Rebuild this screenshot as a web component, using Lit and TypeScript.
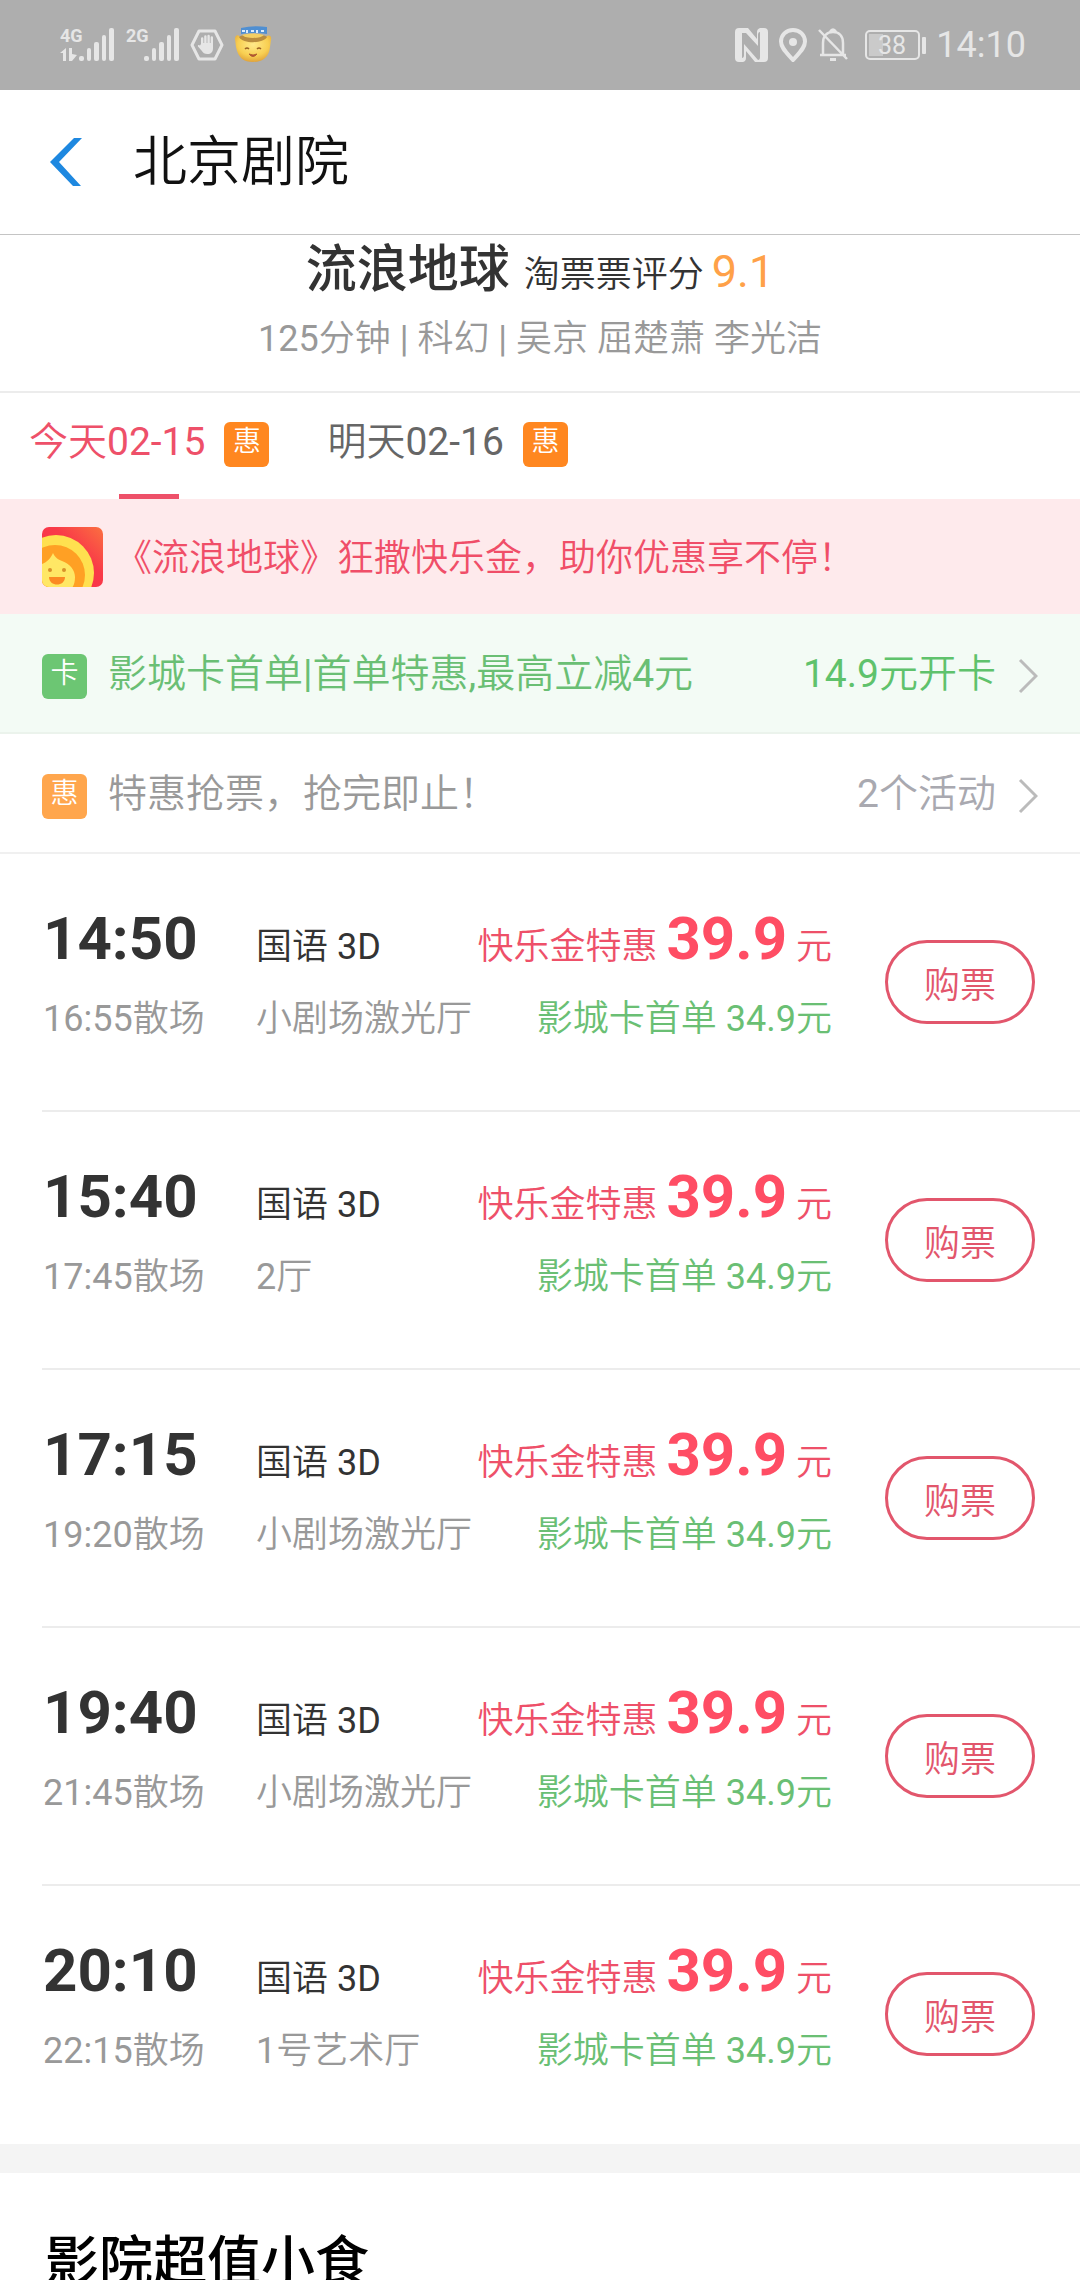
import { LitElement, html, css, svg } from "lit";
import { customElement, property, state } from "lit/decorators.js";
import { classMap } from "lit/directives/class-map.js";

interface Show {
  start: string;
  end: string;
  version: string;
  hall: string;
  price: string;
  cardPrice: string;
}

const SHOWS: Show[] = [
  { start: "14:50", end: "16:55", version: "国语 3D", hall: "小剧场激光厅", price: "39.9", cardPrice: "34.9" },
  { start: "15:40", end: "17:45", version: "国语 3D", hall: "2厅", price: "39.9", cardPrice: "34.9" },
  { start: "17:15", end: "19:20", version: "国语 3D", hall: "小剧场激光厅", price: "39.9", cardPrice: "34.9" },
  { start: "19:40", end: "21:45", version: "国语 3D", hall: "小剧场激光厅", price: "39.9", cardPrice: "34.9" },
  { start: "20:10", end: "22:15", version: "国语 3D", hall: "1号艺术厅", price: "39.9", cardPrice: "34.9" },
];

const DAYS = ["今天02-15", "明天02-16"];

@customElement("status-bar")
export class StatusBar extends LitElement {
  static styles = css`
    :host {
      display: flex;
      align-items: center;
      justify-content: space-between;
      height: 90px;
      padding: 0 54px 0 60px;
      background: #aeaeae;
      color: #e6e6e6;
      font-size: 36px;
      line-height: 48px;
    }
    .group {
      display: flex;
      align-items: center;
      gap: 10px;
    }
    svg {
      display: block;
      fill: currentColor;
    }
    .net {
      font: 700 18px "Liberation Sans Narrow", Roboto, sans-serif;
    }
    .level {
      font: 400 25px Roboto, sans-serif;
    }
  `;

  private signal(label: string, data: boolean) {
    const x = data ? 19 : 18;
    return html`<svg width=${data ? 56 : 54} height="48" viewBox="0 -6 ${data ? 56 : 54} 48">
      <text class="net" x="0" y="15">${label}</text>
      ${data ? svg`<path d="M0 26l6-5v13h-3v-8zM9 21h3v6l5 1-5 6h-3z" />` : null}
      <rect x=${x} y="29" width="5" height="5" rx="2" />
      <rect x=${x + 8} y="21" width="4" height="13" rx="2" />
      <rect x=${x + 15} y="15" width="5" height="19" rx="2" />
      <rect x=${x + 23} y="8" width="4" height="26" rx="2" />
      <rect x=${x + 30} y="1" width="5" height="33" rx="2" />
    </svg>`;
  }

  render() {
    return html`
      <div class="group">
        ${this.signal("4G", true)} ${this.signal("2G", false)}
        <svg width="34" height="32" viewBox="0 0 34 32">
          <path d="M9 2h16l7 14-7 14H9L2 16z" fill="none" stroke="currentColor" stroke-width="3" stroke-linejoin="round" />
          <path d="M11 15V9.500a1.200 1.200 0 0 1 2.400 0V14h.8V7.500a1.200 1.200 0 0 1 2.400 0V14h.8V7a1.200 1.200 0 0 1 2.400 0v7h.8V8.500a1.200 1.200 0 0 1 2.400 0V19c0 4-2 6-5.500 6-3 0-4.500-1-6-3.500L8 17.500c-.6-1.500 1-2 2-1z" />
        </svg>
        <svg width="38" height="38" viewBox="0 0 38 38">
          <defs>
            <radialGradient id="face" cx=".5" cy=".35" r=".7">
              <stop offset="0" stop-color="#ffe98a" />
              <stop offset=".6" stop-color="#f8cf52" />
              <stop offset="1" stop-color="#dc9a35" />
            </radialGradient>
          </defs>
          <path d="M1 13c0-4 3-5 5-2 6 5 20 5 26 0 3-3 6-1 5 3l-1 7c-1 11-8 15-17 15S4 32 2 21z" fill="url(#face)" />
          <path d="M5 11c5-4 23-4 28 0-4 7-24 7-28 0z" fill="#b98c3e" />
          <path d="M8 9c6-2 16-2 22 0-4 4-18 4-22 0z" fill="#f3cf63" />
          <path d="M7 2q12-3 26-1v7q-13-2-26 0z" fill="#4f8fd2" />
          <path d="M8 5h3M13 4v3M17 5h3M23 4v3M27 5h3" stroke="#dcebfa" stroke-width="2" />
          <path d="M11 23q2-2 4 0M23 23q2-2 4 0" fill="none" stroke="#9b6224" stroke-width="1.500" />
          <path d="M15 28q4 2 8 0q-4 5-8 0z" fill="#b8473a" stroke="#b06030" />
        </svg>
      </div>
      <div class="group">
        <svg width="33" height="34" viewBox="0 0 33 34">
          <path fill-rule="evenodd" d="M4 0H13L22 11V4q0-3 3-4h4q4 0 4 4v26q0 4-4 4H20L11 23v7q0 3-3 4H4q-4 0-4-4V4Q0 0 4 0zM7 5v25q2 0 2-3V16l14 16q2 0 2-3V4q-2 0-2 3v11L11 5z" />
        </svg>
        <svg width="30" height="34" viewBox="0 0 30 34">
          <path d="M15 2C8 2 3 7 3 13.500 3 20 9 25 15 32c6-7 12-12 12-18.500C27 7 22 2 15 2z" fill="none" stroke="currentColor" stroke-width="4" />
          <circle cx="15" cy="14" r="4" />
        </svg>
        <svg width="30" height="34" viewBox="0 0 30 34">
          <path d="M5 26V15C5 8 9 4 15 4s10 4 10 11v11M2 27h26M12 4q3-5 6 0M1 2l28 29" fill="none" stroke="currentColor" stroke-width="2.500" />
          <rect x="12" y="30" width="6" height="3" />
        </svg>
        <svg width="68" height="34" viewBox="-7 0 68 34">
          <rect x="1" y="3" width="53" height="28" rx="4" fill="none" stroke="currentColor" stroke-width="2" />
          <rect x="4" y="6" width="14" height="22" opacity=".5" />
          <text class="level" x="13" y="26">38</text>
          <rect x="57" y="9" width="4" height="17" rx="1" />
        </svg>
        <span>14:10</span>
      </div>
    `;
  }
}

@customElement("promo-row")
export class PromoRow extends LitElement {
  @property() tag = "";
  @property() text = "";
  @property() action = "";
  @property({ reflect: true }) tone = "plain";

  static styles = css`
    :host {
      display: block;
      border-bottom: 2px solid #f0f0f0;
      background: #fff;
      color: #999;
    }
    :host([tone="card"]) {
      border-color: #ebf3ec;
      background: #f3fbf5;
      color: #6abf74;
    }
    .link {
      display: flex;
      align-items: center;
      padding: 34px 42px 33px;
      color: inherit;
      text-decoration: none;
      font-size: 39px;
      line-height: 48px;
    }
    .tag {
      box-sizing: border-box;
      width: 45px;
      height: 45px;
      margin-top: 6px;
      border-radius: 6px;
      background: #ffa64d;
      color: #fff;
      font-size: 28px;
      line-height: 40px;
      text-align: center;
    }
    :host([tone="card"]) .tag {
      background: #6cc673;
    }
    .text {
      flex: 1;
      margin-left: 21px;
    }
    .action {
      color: #a9a9b0;
    }
    :host([tone="card"]) .action {
      color: #5fc26c;
    }
    .arrow {
      margin: 4px 0 0 22px;
      fill: none;
      stroke: #bbb;
      stroke-width: 3;
    }
  `;

  render() {
    return html`<a class="link" href="#">
      <span class="tag">${this.tag}</span>
      <span class="text">${this.text}</span>
      <span class="action">${this.action}</span>
      <svg class="arrow" width="20" height="36" viewBox="0 0 20 36"><path d="M2 2l16 16L2 34" /></svg>
    </a>`;
  }
}

@customElement("show-row")
export class ShowRow extends LitElement {
  @property({ attribute: false }) show!: Show;

  static styles = css`
    :host {
      display: flex;
      align-items: center;
      margin-left: 42px;
      padding-right: 45px;
      border-bottom: 2px solid #ececec;
    }
    .info {
      flex: 1;
      display: grid;
      grid-template-columns: 213px 1fr auto;
      align-items: baseline;
      row-gap: 20px;
      padding: 49px 0 67px 1px;
      font-size: 36px;
      line-height: 48px;
      white-space: nowrap;
      color: #999;
    }
    .start {
      color: #333;
      font-size: 60px;
      font-weight: 700;
      line-height: 72px;
    }
    .version {
      color: #333;
    }
    .price {
      color: #ee5069;
      text-align: right;
    }
    .amount {
      color: #ff4d64;
      font-size: 60px;
      line-height: 72px;
    }
    .card {
      color: #6abf74;
      text-align: right;
    }
    .buy {
      width: 150px;
      height: 84px;
      margin-left: 53px;
      padding: 0;
      border: 3px solid #e2566c;
      border-radius: 42px;
      background: none;
      color: #e2566c;
      font: inherit;
      font-size: 36px;
    }
  `;

  render() {
    const s = this.show;
    return html`
      <div class="info">
        <time class="start">${s.start}</time>
        <span class="version">${s.version}</span>
        <span class="price">快乐金特惠 <b class="amount">${s.price}</b> 元</span>
        <span>${s.end}散场</span>
        <span>${s.hall}</span>
        <span class="card">影城卡首单 ${s.cardPrice}元</span>
      </div>
      <button class="buy" type="button">购票</button>
    `;
  }
}

@customElement("app-root")
export class AppRoot extends LitElement {
  @state() private day = 0;

  static styles = css`
    :host {
      display: flex;
      flex-direction: column;
      height: 100vh;
      background: #fff;
      color: #333;
      font-family: Roboto, "Noto Sans CJK SC DemiLight", "Noto Sans CJK SC", sans-serif;
    }
    .bar {
      display: flex;
      align-items: center;
      gap: 51px;
      padding: 35px 50px;
      border-bottom: 1px solid #c4c4c4;
    }
    .back {
      display: flex;
      padding: 0;
      border: 0;
      background: none;
    }
    .cinema {
      margin: 0;
      padding-top: 2px;
      color: #111;
      font-size: 54px;
      font-weight: 400;
      line-height: 72px;
    }
    .page {
      flex: 1;
      min-height: 0;
      overflow: auto;
      scrollbar-width: none;
    }
    .film {
      padding: 5px 30px 28px;
      border-bottom: 2px solid #ececec;
      text-align: center;
    }
    .heading {
      display: flex;
      align-items: baseline;
      justify-content: center;
      gap: 14px;
    }
    .name,
    .snacks-title {
      margin: 0;
      font-family: Roboto, "Noto Sans CJK SC", sans-serif;
      font-weight: 500;
    }
    .name {
      font-size: 51px;
      line-height: 60px;
    }
    .rating {
      display: flex;
      align-items: baseline;
      gap: 8px;
      font-size: 36px;
      line-height: 40px;
    }
    .score {
      color: #ffa148;
      font-size: 45px;
    }
    .meta {
      margin: 15px 0 0;
      color: #999;
      font-size: 36px;
      line-height: 48px;
    }
    .days {
      display: flex;
    }
    .day {
      position: relative;
      display: flex;
      align-items: center;
      gap: 19px;
      height: 106px;
      padding: 0 29px 8px;
      border: 0;
      background: none;
      color: #666;
      font: inherit;
      font-size: 39px;
      line-height: 48px;
    }
    .day.active {
      color: #ee5069;
    }
    .day.active::after {
      content: "";
      position: absolute;
      left: 50%;
      bottom: 0;
      width: 60px;
      height: 5px;
      margin-left: -30px;
      background: #ee5069;
    }
    .deal {
      width: 45px;
      height: 45px;
      margin-top: 4px;
      border-radius: 6px;
      background: #ff8720;
      color: #fff;
      font-size: 28px;
      line-height: 40px;
    }
    .banner {
      display: flex;
      align-items: center;
      gap: 12px;
      padding: 28px 42px 27px;
      background: #feeaec;
      color: #f04e68;
      font-size: 37px;
      line-height: 48px;
    }
    .slogan {
      padding-top: 4px;
    }
    .shows {
      margin: 0;
      padding: 0;
      list-style: none;
    }
    .shows li:last-child show-row {
      border-color: transparent;
    }
    .snacks {
      padding: 54px 45px 30px;
      border-top: 29px solid #f4f4f4;
    }
    .snacks-title {
      color: #000;
      font-size: 54px;
      line-height: 72px;
    }
  `;

  render() {
    return html`
      <status-bar></status-bar>
      <header class="bar">
        <button class="back" type="button" aria-label="返回">
          <svg width="32" height="48" viewBox="0 0 32 48">
            <path d="M24 0h8L9 24l22 24h-8L0 24z" fill="#1e88e0" />
          </svg>
        </button>
        <h1 class="cinema">北京剧院</h1>
      </header>
      <main class="page">
        <section class="film">
          <div class="heading">
            <h2 class="name">流浪地球</h2>
            <span class="rating">淘票票评分 <span class="score">9.1</span></span>
          </div>
          <p class="meta">125分钟 | 科幻 | 吴京 屈楚萧 李光洁</p>
        </section>
        <nav class="days">
          ${DAYS.map(
            (label, i) => html`<button
              type="button"
              class=${classMap({ day: true, active: i === this.day })}
              @click=${() => (this.day = i)}
            >
              <span>${label}</span><span class="deal">惠</span>
            </button>`,
          )}
        </nav>
        <div class="banner">
          <svg width="61" height="60" viewBox="0 0 61 60">
            <defs>
              <linearGradient id="bg" x1="0" y1="1" x2="1" y2="0">
                <stop offset="0" stop-color="#f92a4c" />
                <stop offset=".6" stop-color="#f93a48" />
                <stop offset="1" stop-color="#fb7040" />
              </linearGradient>
              <clipPath id="tile"><rect width="61" height="60" rx="7" /></clipPath>
            </defs>
            <g clip-path="url(#tile)">
              <rect width="61" height="60" fill="url(#bg)" />
              <circle cx="14" cy="46" r="38" fill="#ffe04f" />
              <circle cx="13" cy="48" r="30" fill="#ffa024" />
              <path d="M0 37c5-2 9-6 11-11 2 4 4 6 9 8 8 3 13 9 13 16 0 5-1 8-3 11H0z" fill="#ffe765" />
              <circle cx="8" cy="43" r="2" fill="#d8912a" />
              <circle cx="22" cy="43" r="2" fill="#d8912a" />
              <path d="M7 50h16c0 10-16 10-16 0z" fill="#fb8a22" />
            </g>
          </svg>
          <span class="slogan">《流浪地球》狂撒快乐金，助你优惠享不停！</span>
        </div>
        <promo-row tone="card" tag="卡" text="影城卡首单|首单特惠,最高立减4元" action="14.9元开卡"></promo-row>
        <promo-row tag="惠" text="特惠抢票，抢完即止！" action="2个活动"></promo-row>
        <ul class="shows">
          ${SHOWS.map((show) => html`<li><show-row .show=${show}></show-row></li>`)}
        </ul>
        <section class="snacks">
          <h2 class="snacks-title">影院超值小食</h2>
        </section>
      </main>
    `;
  }
}
